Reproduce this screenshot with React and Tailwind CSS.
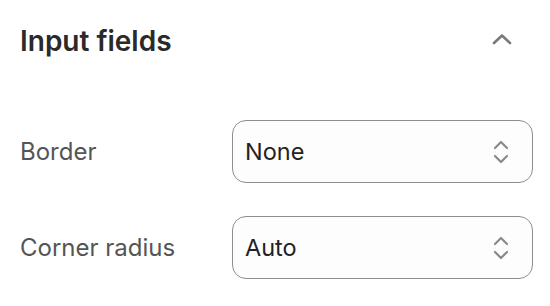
const ChevronUp = () => (
  <svg width="20" height="12" viewBox="0 0 20 12" fill="none">
    <path d="M2 10 L10 2.5 L18 10" stroke="#7a7a7a" strokeWidth="2.6" strokeLinecap="round" strokeLinejoin="round" />
  </svg>
);

const Stepper = () => (
  <svg width="16" height="26" viewBox="0 0 16 26" fill="none">
    <path d="M2 9 L8 3 L14 9" stroke="#8a8a8a" strokeWidth="2.2" strokeLinecap="round" strokeLinejoin="round" />
    <path d="M2 17 L8 23 L14 17" stroke="#8a8a8a" strokeWidth="2.2" strokeLinecap="round" strokeLinejoin="round" />
  </svg>
);

const SelectRow = ({ label, value }) => (
  <div className="grid grid-cols-[212px_1fr] items-center">
    <span className="text-[24px] text-[#555555]">{label}</span>
    <div className="h-[63px] rounded-[14px] border border-[#8e8e8e] bg-[#fdfdfd] flex items-center justify-between pl-[12px] pr-[23px]">
      <span className="text-[23.5px] text-[#222222]">{value}</span>
      <Stepper />
    </div>
  </div>
);

export default function App() {
  return (
    <div
      className="w-[550px] h-[306px] bg-white pl-[20px] pr-[17px]"
      style={{ fontFamily: "Inter, 'Noto Sans', sans-serif" }}
    >
      {/* HEADER */}
      <div className="flex justify-between pt-[23px] h-[120px] items-start">
        <h1 className="text-[28px] leading-[36px] font-semibold text-[#2a2a2a]">Input fields</h1>
        <div className="pt-[10px] pr-[21px]">
          <ChevronUp />
        </div>
      </div>

      {/* ROWS */}
      <div className="flex flex-col gap-[33px]">
        <SelectRow label="Border" value="None" />
        <SelectRow label="Corner radius" value="Auto" />
      </div>
    </div>
  );
}
